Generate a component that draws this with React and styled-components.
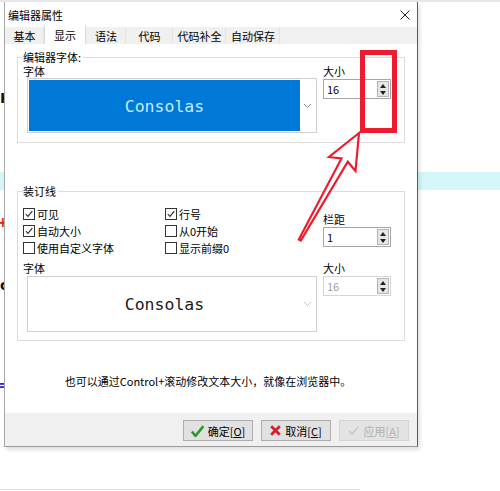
import React from 'react';
import styled, { createGlobalStyle } from 'styled-components';

const GlobalStyle = createGlobalStyle`
  html, body {
    margin: 0;
    padding: 0;
    background: #fff;
  }
  body {
    font-family: "Noto Sans CJK SC", "Noto Sans", sans-serif;
  }
`;

const Page = styled.div`
  position: relative;
  width: 500px;
  height: 491px;
  overflow: hidden;
  background: #fff;
`;

/* editor behind the dialog */
const Backdrop = styled.div`
  display: flex;
  flex-direction: column;
`;

const Line = styled.div`
  height: ${p => p.$h}px;
  width: ${p => p.$w || '100%'};
  background: ${p => p.$bg || 'transparent'};
  display: flex;
  align-items: center;
  overflow: hidden;
`;

const Glyph = styled.span`
  color: ${p => p.$color};
  font: bold 14px/1 "DejaVu Sans", sans-serif;
  margin-left: ${p => p.$shift || 0}px;
`;

/* dialog */
const Dialog = styled.div`
  position: absolute;
  left: 4px;
  top: 2px;
  width: 412px;
  height: 444px;
  display: flex;
  flex-direction: column;
  background: #fff;
  border-left: 1px solid #a9a9a9;
  border-right: 1px solid #5c5c5c;
  border-bottom: 1px solid #9a9a9a;
  box-shadow: 2px 3px 4px rgba(0, 0, 0, 0.12);
  font-size: 11px;
  line-height: 14px;
  color: #000;
`;

const TitleBar = styled.div`
  height: 25px;
  flex: none;
  display: flex;
  align-items: center;
  justify-content: space-between;
  padding: 0 7px 0 3px;
`;

const TabStrip = styled.div`
  height: 17px;
  flex: none;
  display: flex;
  background: #f0f0f0;
`;

const Tab = styled.div`
  width: ${p => p.$w}px;
  display: flex;
  align-items: center;
  justify-content: center;
  box-sizing: border-box;
  background: ${p => (p.$active ? '#fff' : 'transparent')};
  border-left: 1px solid ${p => (p.$active ? '#d9d9d9' : 'transparent')};
  border-right: 1px solid ${p => (p.$active ? '#d9d9d9' : '#e4e4e4')};
  margin-top: ${p => (p.$active ? -2 : 0)}px;
`;

const TabPanel = styled.div`
  flex: 1;
  display: flex;
  flex-direction: column;
  padding: 7px 12px 0 12px;
`;

const Group = styled.fieldset`
  margin: ${p => p.$gap || 0}px 0 0 0;
  padding: 0 5px ${p => p.$pb}px 5px;
  border: 1px solid #dcdcdc;
  min-width: 0;
`;

const Legend = styled.legend`
  padding: 0 2px 0 0;
  font-size: 11px;
  line-height: 12px;
`;

const Label = styled.div`
  line-height: 14px;
  margin-top: ${p => p.$mt || 0}px;
`;

const FontRow = styled.div`
  display: grid;
  grid-template-columns: 294px 68px;
  column-gap: 6px;
  margin-top: ${p => p.$mt || 0}px;
`;

const Combo = styled.div`
  margin: ${p => p.$mt || 0}px 0 0 4px;
  width: 290px;
  height: ${p => p.$h}px;
  box-sizing: border-box;
  border: 1px solid #cfcfcf;
  padding: 1px;
  display: flex;
  background: #fff;
`;

const ComboFace = styled.div`
  flex: 1;
  display: flex;
  align-items: center;
  justify-content: center;
  padding-top: 3px;
  background: ${p => (p.$selected ? '#0078d7' : '#fff')};
  color: ${p => (p.$selected ? '#c4eeff' : '#1a1a1a')};
  font: 16.5px/1 "DejaVu Sans Mono", "Liberation Mono", monospace;
`;

const ComboArrow = styled.div`
  width: 15px;
  display: flex;
  align-items: center;
  justify-content: center;
  color: ${p => (p.$disabled ? '#c8c8c8' : '#8a8a8a')};
`;

const Spin = styled.div`
  width: 68px;
  height: 20px;
  box-sizing: border-box;
  margin-top: ${p => p.$mt || 0}px;
  border: 1px solid ${p => (p.$disabled ? '#d5d5d5' : '#a6a6a6')};
  display: flex;
  align-items: center;
  padding-left: 3px;
  color: ${p => (p.$disabled ? '#a0a0a0' : '#000')};
  background: #fff;
`;

const SpinButtons = styled.div`
  margin-left: auto;
  margin-right: 1px;
  width: 12px;
  height: 16px;
  box-sizing: border-box;
  border: 1px solid #b5b5b5;
  background: #e6e6e6;
  display: flex;
  flex-direction: column;
  align-items: center;
  justify-content: space-around;
`;

const OptionGrid = styled.div`
  display: grid;
  grid-template-columns: 142px 158px 68px;
  margin-top: 8px;
`;

const OptionCol = styled.div`
  display: flex;
  flex-direction: column;
`;

const SideCol = styled.div`
  display: flex;
  flex-direction: column;
  padding-top: 7px;
`;

const Option = styled.label`
  height: 17px;
  display: flex;
  align-items: center;
  gap: 2px;
`;

const Box = styled.span`
  width: 12px;
  height: 12px;
  box-sizing: border-box;
  border: 1px solid #333;
  background: #fff;
  display: flex;
  align-items: center;
  justify-content: center;
`;

const Hint = styled.div`
  margin-top: 33px;
  text-align: center;
  padding-right: 6px;
`;

const ButtonBar = styled.div`
  height: 33px;
  flex: none;
  box-sizing: border-box;
  display: flex;
  justify-content: flex-end;
  align-items: flex-start;
  gap: 8px;
  padding: 7px 8px 0 0;
  background: #f0f0f0;
`;

const Button = styled.button`
  width: 70px;
  height: 21px;
  padding: 0;
  display: flex;
  align-items: center;
  justify-content: center;
  gap: 4px;
  font: 11px/14px "Noto Sans CJK SC", "Noto Sans", sans-serif;
  color: ${p => (p.disabled ? '#b0b0b0' : '#000')};
  background: ${p => (p.disabled ? '#e3e3e3' : '#e1e1e1')};
  border: 1px solid ${p => (p.disabled ? '#d3d3d3' : '#adadad')};
  u {
    text-decoration: underline;
  }
`;

const Overlay = styled.svg`
  position: absolute;
  left: 0;
  top: 0;
  pointer-events: none;
`;

const Chevron = () => (
  <svg width="9" height="6" viewBox="0 0 9 6">
    <path d="M1 1l3.5 3.5L8 1" fill="none" stroke="currentColor" strokeWidth="1" />
  </svg>
);

const Arrows = () => (
  <SpinButtons>
    <svg width="6" height="4" viewBox="0 0 6 4"><path d="M0 4L3 0L6 4Z" fill="#222" /></svg>
    <svg width="6" height="4" viewBox="0 0 6 4"><path d="M0 0L3 4L6 0Z" fill="#222" /></svg>
  </SpinButtons>
);

const Check = ({ checked, children }) => (
  <Option>
    <Box>
      {checked && (
        <svg width="8" height="8" viewBox="0 0 8 8">
          <path d="M0.8 4.2L3 6.4L7.3 1.2" fill="none" stroke="#333" strokeWidth="1.2" />
        </svg>
      )}
    </Box>
    {children}
  </Option>
);

const tabs = [
  ['基本', 39],
  ['显示', 42, true],
  ['语法', 40],
  ['代码', 47],
  ['代码补全', 53],
  ['自动保存', 54],
];

export default function App() {
  return (
    <Page>
      <GlobalStyle />
      <Backdrop>
        <Line $h={2} $bg="#e6e6e6" />
        <Line $h={87} />
        <Line $h={18}><Glyph $color="#111">H</Glyph></Line>
        <Line $h={65} />
        <Line $h={18} $bg="#d4f8fa" />
        <Line $h={23} />
        <Line $h={18}><Glyph $color="#e02020" $shift={-3}>+</Glyph></Line>
        <Line $h={45} />
        <Line $h={18}><Glyph $color="#111">c</Glyph></Line>
        <Line $h={82} />
        <Line $h={18}><Glyph $color="#2a2ad0" $shift={-2}>=</Glyph></Line>
        <Line $h={95} />
        <Line $h={1} $w="360px" $bg="#dcdcdc" />
      </Backdrop>

      <Dialog>
        <TitleBar>
          <span>编辑器属性</span>
          <svg width="10" height="10" viewBox="0 0 10 10">
            <path d="M0.5 0.5L9.5 9.5M9.5 0.5L0.5 9.5" stroke="#222" strokeWidth="1" />
          </svg>
        </TitleBar>

        <TabStrip>
          {tabs.map(([name, w, active]) => (
            <Tab key={name} $w={w} $active={active}>{name}</Tab>
          ))}
        </TabStrip>

        <TabPanel>
          <Group $pb={9}>
            <Legend>编辑器字体:</Legend>
            <FontRow $mt={1}>
              <div>
                <Label>字体</Label>
                <Combo $h={55}>
                  <ComboFace $selected>Consolas</ComboFace>
                  <ComboArrow><Chevron /></ComboArrow>
                </Combo>
              </div>
              <div>
                <Label>大小</Label>
                <Spin $mt={1}>16<Arrows /></Spin>
              </div>
            </FontRow>
          </Group>

          <Group $gap={42} $pb={8}>
            <Legend>装订线</Legend>
            <OptionGrid>
              <OptionCol>
                <Check checked>可见</Check>
                <Check checked>自动大小</Check>
                <Check>使用自定义字体</Check>
              </OptionCol>
              <OptionCol>
                <Check checked>行号</Check>
                <Check>从0开始</Check>
                <Check>显示前缀0</Check>
              </OptionCol>
              <SideCol>
                <Label>栏距</Label>
                <Spin $mt={1}>1<Arrows /></Spin>
              </SideCol>
            </OptionGrid>
            <FontRow $mt={5}>
              <div>
                <Label>字体</Label>
                <Combo $h={56} $mt={1}>
                  <ComboFace>Consolas</ComboFace>
                  <ComboArrow $disabled><Chevron /></ComboArrow>
                </Combo>
              </div>
              <div>
                <Label>大小</Label>
                <Spin $mt={1} $disabled>16<Arrows /></Spin>
              </div>
            </FontRow>
          </Group>

          <Hint>也可以通过Control+滚动修改文本大小，就像在浏览器中。</Hint>
        </TabPanel>

        <ButtonBar>
          <Button>
            <svg width="13" height="12" viewBox="0 0 13 12">
              <path d="M0.8 6.5L4.5 10.8L12.4 1.2" fill="none" stroke="#2f9a2a" strokeWidth="2.6" strokeLinejoin="round" />
            </svg>
            <span>确定[<u>O</u>]</span>
          </Button>
          <Button>
            <svg width="11" height="11" viewBox="0 0 11 11">
              <path d="M1.2 1.2L9.8 9.8M9.8 1.2L1.2 9.8" stroke="#d4202c" strokeWidth="2.8" />
            </svg>
            <span>取消[<u>C</u>]</span>
          </Button>
          <Button disabled>
            <svg width="11" height="11" viewBox="0 0 11 11">
              <path d="M1 6L4 9L10 2" fill="none" stroke="#c8c8c8" strokeWidth="1.6" />
            </svg>
            <span>应用[<u>A</u>]</span>
          </Button>
        </ButtonBar>
      </Dialog>

      <Overlay width="500" height="491" viewBox="0 0 500 491">
        <rect x="362.5" y="52.5" width="32" height="78" fill="none" stroke="#ec1c2e" strokeWidth="5" />
        <path
          d="M359 133L329 157L341.5 158.5L298.8 239.5L300.8 240.5L347.8 161.7L355.5 171Z"
          fill="none"
          stroke="#ec1c2e"
          strokeWidth="2.2"
          strokeLinejoin="miter"
        />
      </Overlay>
    </Page>
  );
}
